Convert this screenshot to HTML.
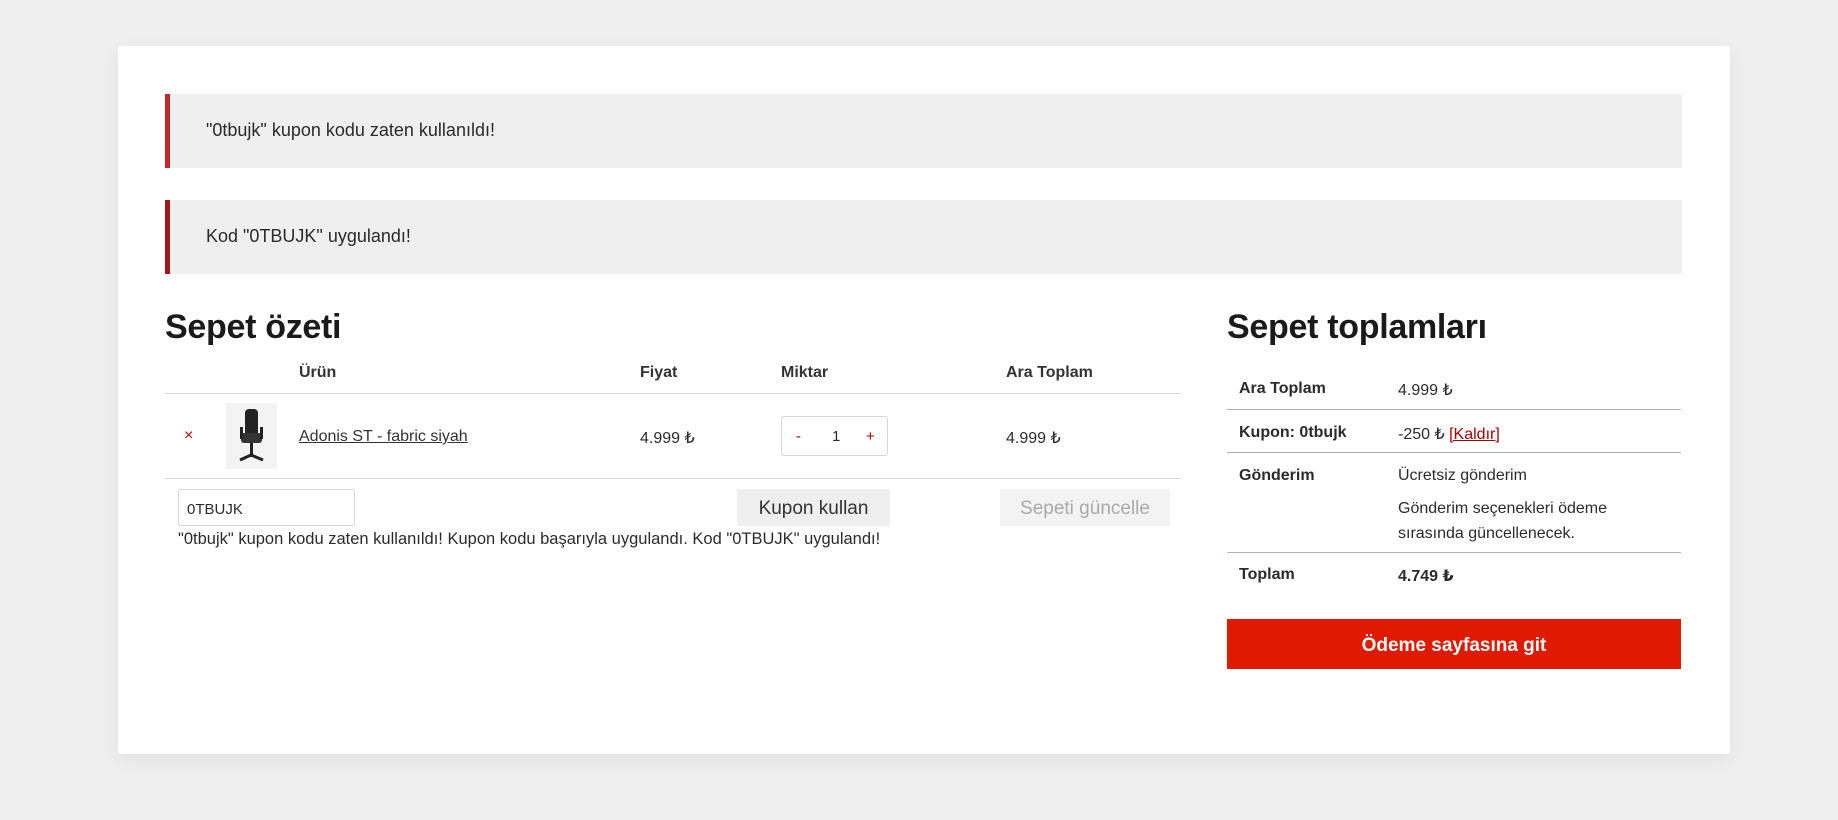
<!DOCTYPE html>
<html><head><meta charset="utf-8"><style>
*{box-sizing:border-box;margin:0;padding:0}
body{width:1838px;height:820px;background:#efefef;font-family:"Liberation Sans","DejaVu Sans",sans-serif;color:#2b2b2b;position:relative;overflow:hidden}
.card{position:absolute;left:118px;top:46px;width:1612px;height:708px;background:#fff;box-shadow:0 6px 20px rgba(0,0,0,.06);border-radius:3px}
.a{position:absolute}
.notice{left:165px;width:1517px;height:74px;background:#efefef;border-left:5px solid #c1272d;font-size:18px;padding:26px 0 0 36px}
h2{position:absolute;font-size:34px;font-weight:bold;color:#1a1a1a;letter-spacing:-0.3px}
.th{font-size:16px;font-weight:bold;color:#333}
.hl{position:absolute;height:1px;background:#d6d6d6}
.rl{position:absolute;left:1227px;width:454px;height:1px;background:#a9b4bd}
.t{font-size:16px}
.lab{font-size:16px;font-weight:bold;left:1239px}
.val{font-size:16px;left:1398px}
.btn{background:#efefef;font-size:19px;text-align:center;line-height:39px}
</style></head><body>
<div class="card"></div>
<div class="a notice" style="top:94px">"0tbujk" kupon kodu zaten kullanıldı!</div>
<div class="a notice" style="top:200px;border-left-color:#a3161c">Kod "0TBUJK" uygulandı!</div>

<h2 style="left:165px;top:308px">Sepet özeti</h2>
<div class="a th" style="left:299px;top:364px">Ürün</div>
<div class="a th" style="left:640px;top:364px">Fiyat</div>
<div class="a th" style="left:781px;top:364px">Miktar</div>
<div class="a th" style="left:1006px;top:364px">Ara Toplam</div>
<div class="hl" style="left:165px;width:1016px;top:393px"></div>
<div class="a" style="left:184px;top:427px;color:#c00;font-size:16px">×</div>
<div class="a" style="left:226px;top:403px;width:51px;height:66px;background:#f3f3f3">
<svg width="51" height="66" viewBox="0 0 51 66"><rect x="19" y="6" width="13" height="30" rx="4" fill="#222"/><rect x="15" y="30" width="21" height="10" rx="3" fill="#333"/><rect x="14" y="24" width="3" height="12" fill="#222"/><rect x="34" y="24" width="3" height="12" fill="#222"/><rect x="24" y="40" width="3" height="14" fill="#222"/><path d="M14 57 L25 52 L37 57" stroke="#222" stroke-width="3" fill="none"/></svg></div>
<div class="a t" style="left:299px;top:428px;text-decoration:underline;color:#333">Adonis ST - fabric siyah</div>
<div class="a t" style="left:640px;top:428px">4.999 ₺</div>
<div class="a" style="left:781px;top:416px;width:107px;height:40px;border:1px solid #d6d6d6;border-radius:3px;font-size:15px">
<span class="a" style="left:14px;top:11px;color:#a00">-</span><span class="a" style="left:50px;top:11px">1</span><span class="a" style="left:84px;top:11px;color:#a00">+</span></div>
<div class="a t" style="left:1006px;top:428px">4.999 ₺</div>
<div class="hl" style="left:165px;width:1016px;top:478px"></div>
<div class="a" style="left:178px;top:489px;width:177px;height:37px;border:1px solid #d6d6d6;border-radius:2px;font-size:15px;padding:11px 0 0 8px">0TBUJK</div>
<div class="a btn" style="left:737px;top:489px;width:153px;height:37px;color:#333">Kupon kullan</div>
<div class="a btn" style="left:1000px;top:489px;width:170px;height:37px;color:#aaa;background:#f3f3f3">Sepeti güncelle</div>
<div class="a" style="left:178px;top:530px;font-size:16.5px">"0tbujk" kupon kodu zaten kullanıldı! Kupon kodu başarıyla uygulandı. Kod "0TBUJK" uygulandı!</div>

<h2 style="left:1227px;top:308px">Sepet toplamları</h2>
<div class="a lab" style="top:380px">Ara Toplam</div><div class="a val" style="top:380px">4.999 ₺</div>
<div class="rl" style="top:409px"></div>
<div class="a lab" style="top:424px">Kupon: 0tbujk</div><div class="a val" style="top:424px">-250 ₺ <span style="color:#a00;text-decoration:underline">[Kaldır]</span></div>
<div class="rl" style="top:452px"></div>
<div class="a lab" style="top:467px">Gönderim</div><div class="a val" style="top:467px">Ücretsiz gönderim</div>
<div class="a val" style="top:496px;line-height:25px">Gönderim seçenekleri ödeme<br>sırasında güncellenecek.</div>
<div class="rl" style="top:552px"></div>
<div class="a lab" style="top:566px">Toplam</div><div class="a val" style="top:566px;font-weight:bold">4.749 ₺</div>
<div class="a" style="left:1227px;top:619px;width:454px;height:50px;background:#e01a00;color:#fff;font-size:19px;text-align:center;line-height:54px;font-weight:bold">Ödeme sayfasına git</div>
</body></html>
